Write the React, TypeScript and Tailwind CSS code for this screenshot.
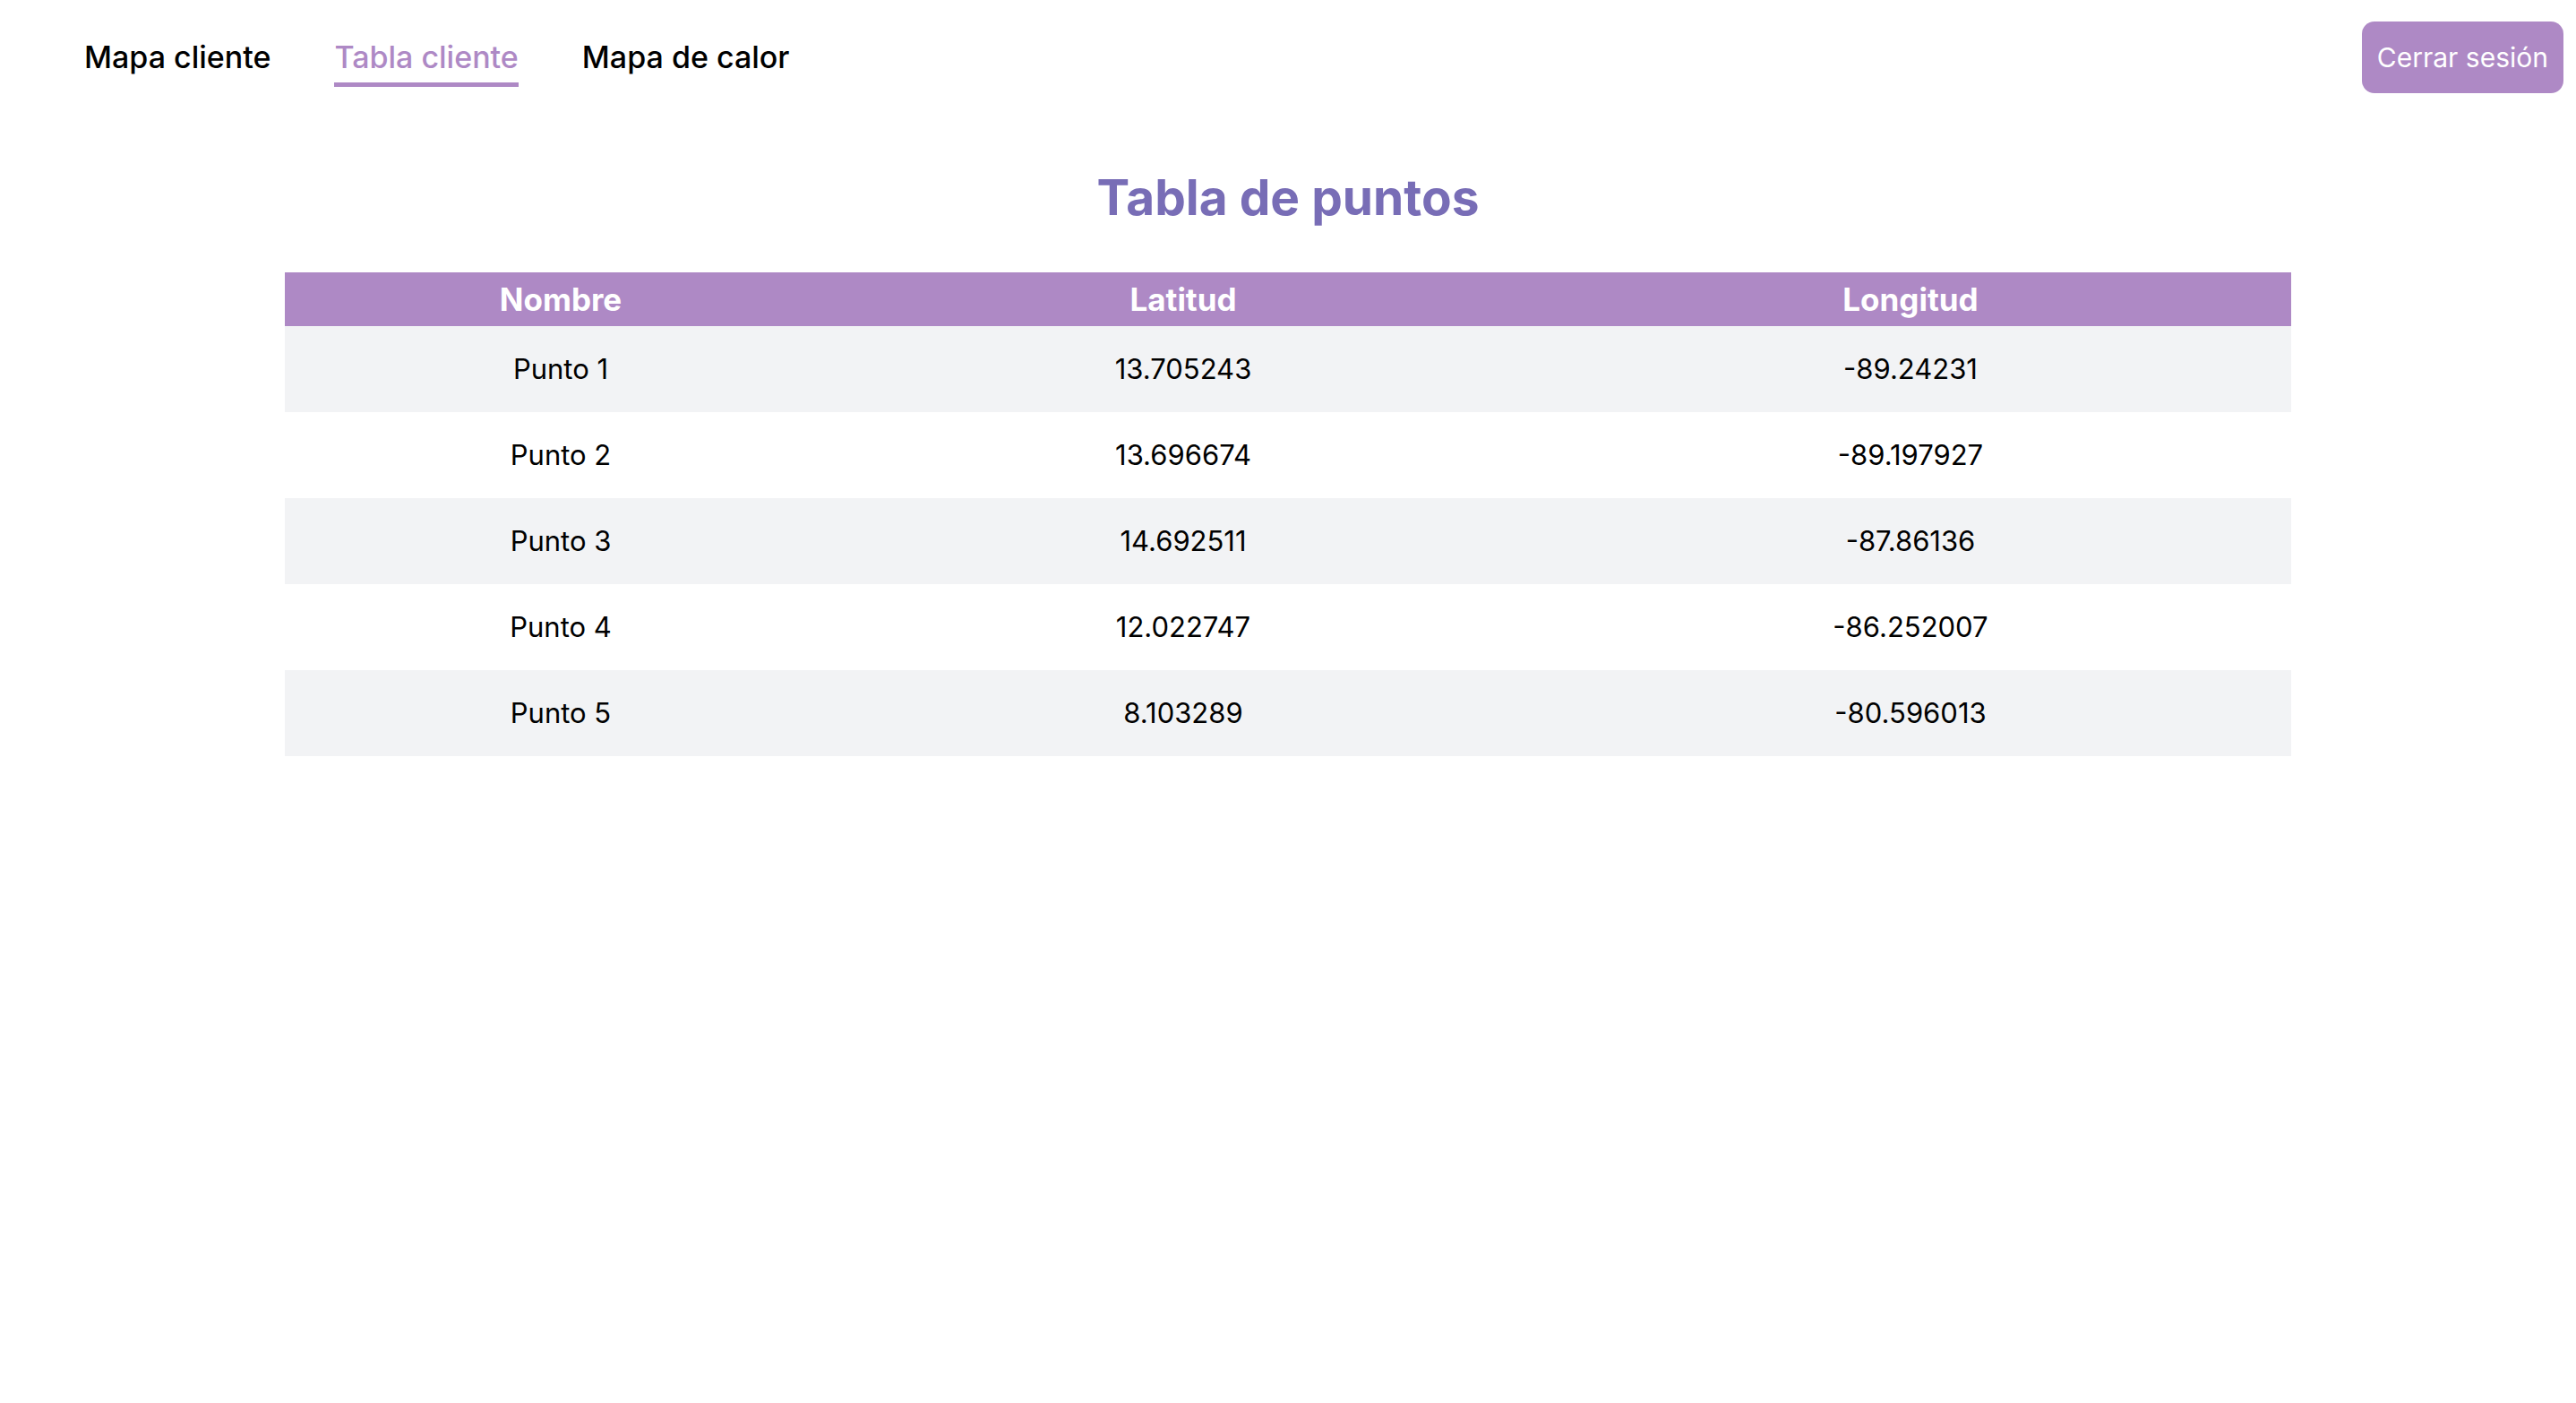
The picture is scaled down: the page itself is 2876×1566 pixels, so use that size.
import React from "react";

const rows = [
  { n: "Punto 1", lat: "13.705243", lng: "-89.24231" },
  { n: "Punto 2", lat: "13.696674", lng: "-89.197927" },
  { n: "Punto 3", lat: "14.692511", lng: "-87.86136" },
  { n: "Punto 4", lat: "12.022747", lng: "-86.252007" },
  { n: "Punto 5", lat: "8.103289", lng: "-80.596013" },
];

export default function App() {
  return (
    <div className="min-h-screen bg-white text-black" style={{ fontFamily: "Inter, 'Noto Sans', sans-serif" }}>
      <header className="flex items-start justify-between pl-[94px] pr-[14px] pt-[24px]">
        <nav className="flex gap-[71px] pt-[19px]">
          <a className="block text-[34px] leading-[42px] font-medium pb-[11px]">Mapa cliente</a>
          <a className="block text-[34px] leading-[42px] font-medium text-[#ae89c5] pb-[7px] border-b-[5px] border-[#ae89c5]">Tabla cliente</a>
          <a className="block text-[34px] leading-[42px] font-medium pb-[11px]">Mapa de calor</a>
        </nav>
        <button className="h-[80px] px-[17px] rounded-[14px] bg-[#ae89c5] text-white text-[30px]">Cerrar sesión</button>
      </header>
      <h1 className="mt-[83px] text-center text-[55px] leading-[66px] font-bold text-[#786db6]">Tabla de puntos</h1>
      <table className="mx-auto mt-[51px] w-[2240px] border-collapse text-center">
        <colgroup>
          <col className="w-[616px]" />
          <col className="w-[774px]" />
          <col className="w-[850px]" />
        </colgroup>
        <thead>
          <tr className="bg-[#ae89c5] text-white">
            <th className="h-[60px] text-[35px] leading-[42px] font-bold">Nombre</th>
            <th className="h-[60px] text-[35px] leading-[42px] font-bold">Latitud</th>
            <th className="h-[60px] text-[35px] leading-[42px] font-bold">Longitud</th>
          </tr>
        </thead>
        <tbody>
          {rows.map((r, i) => (
            <tr key={r.n} className={i % 2 === 0 ? "bg-[#f2f3f5]" : "bg-white"}>
              <td className="h-[96px] text-[31px]">{r.n}</td>
              <td className="h-[96px] text-[31px]">{r.lat}</td>
              <td className="h-[96px] text-[31px]">{r.lng}</td>
            </tr>
          ))}
        </tbody>
      </table>
    </div>
  );
}
